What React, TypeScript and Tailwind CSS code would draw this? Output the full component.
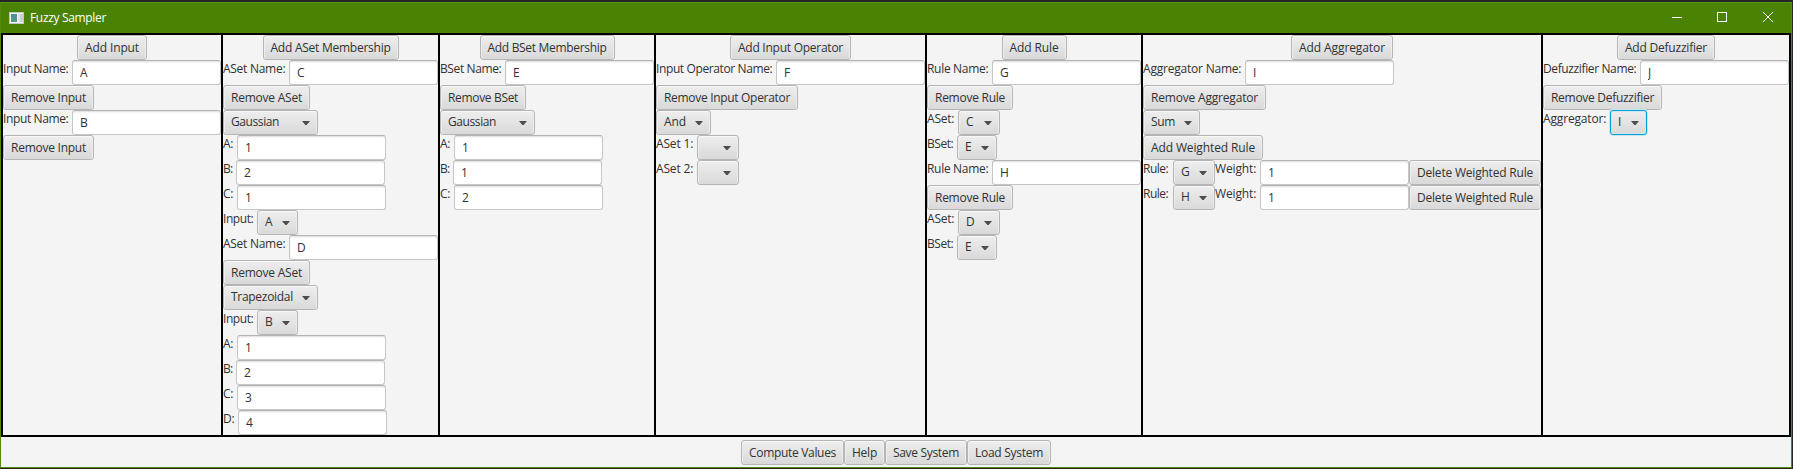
import React, { useLayoutEffect, useRef, useState } from "react";

const gradient = "bg-linear-to-b from-[#eeeeee] to-[#d9d9d9]";
const bevel = "shadow-[inset_0_1px_0_#f8f8f8,inset_1px_0_0_#eeeeee,inset_-1px_0_0_#eeeeee]";

/** Text whose tracking is adjusted so that its advance equals `t` pixels. */
function Fit({ t, children }: { t?: number; children: string }) {
  const ref = useRef<HTMLSpanElement>(null);
  const [spacing, setSpacing] = useState(0);
  useLayoutEffect(() => {
    if (!ref.current || !t || !children.length) return;
    const natural = ref.current.getBoundingClientRect().width - spacing * children.length;
    setSpacing((t - natural) / children.length);
  }, [t, children]);
  return (
    <span ref={ref} className="inline-block whitespace-nowrap" style={{ letterSpacing: spacing }}>
      {children}
    </span>
  );
}

function Btn({ w, t, children }: { w: string; t: number; children: string }) {
  return (
    <button
      className={`${w} ${gradient} ${bevel} block h-[25px] shrink-0 whitespace-nowrap rounded-[3px] border border-[#b5b5b5] p-0 pl-[7px] text-left leading-[22px]`}
    >
      <Fit t={t}>{children}</Fit>
    </button>
  );
}

function Combo({ w, value, t, focused }: { w: string; value: string; t?: number; focused?: boolean }) {
  const edge = focused
    ? "border-[#039ed3] shadow-[0_0_0_1px_#c5e6f2,inset_0_0_0_1px_#cfe6ee]"
    : `border-[#b5b5b5] ${bevel}`;
  return (
    <button
      className={`${w} ${gradient} ${edge} flex h-[25px] shrink-0 items-center justify-between rounded-[3px] border pl-[7px] pr-[7px]`}
    >
      <span className="-mt-px leading-[22px]">
        <Fit t={t}>{value}</Fit>
      </span>
      <svg width="8" height="4" viewBox="0 0 8 4" className="shrink-0">
        <path d="M0 0H8L4.6 4H3.4Z" fill="#4d4d4d" />
      </svg>
    </button>
  );
}

function Field({ value }: { value: string }) {
  return (
    <input
      readOnly
      value={value}
      className="h-[25px] w-[149px] shrink-0 rounded-[3px] border border-[#c6c6c6] border-t-[#b4b4b4] bg-white px-[7px] pb-px leading-[20px] shadow-[inset_0_2px_2px_-1px_#dcdcdc] outline-none"
    />
  );
}

function Label({ w, t, children }: { w: string; t: number; children: string }) {
  return (
    <span className={`${w} block h-4 shrink-0 whitespace-nowrap leading-[17px]`}>
      <Fit t={t - 0.7}>{children}</Fit>
    </span>
  );
}

function Row({ children, center }: { children: React.ReactNode; center?: boolean }) {
  return <div className={`flex h-[25px] items-start ${center ? "justify-center" : ""}`}>{children}</div>;
}

function Column({ w, children }: { w: string; children: React.ReactNode }) {
  return <section className={`${w} shrink-0 border-r-2 border-black`}>{children}</section>;
}

function Param({ w, t, name, value }: { w: string; t: number; name: string; value: string }) {
  return (
    <Row>
      <Label w={w} t={t}>{name}</Label>
      <Field value={value} />
    </Row>
  );
}

interface ChoiceProps {
  lw: string;
  t: number;
  name: string;
  w: string;
  value: string;
  focused?: boolean;
}

function Choice({ lw, t, name, w, value, focused }: ChoiceProps) {
  return (
    <Row>
      <Label w={lw} t={t}>{name}</Label>
      <Combo w={w} value={value} focused={focused} />
    </Row>
  );
}

function WeightedRule({ rule }: { rule: string }) {
  return (
    <Row>
      <Label w="w-[30px]" t={26}>Rule:</Label>
      <Combo w="w-[42px]" value={rule} />
      <Label w="w-[45px]" t={42}>Weight:</Label>
      <Field value="1" />
      <Btn w="w-[132px]" t={116}>Delete Weighted Rule</Btn>
    </Row>
  );
}

function TitleBar() {
  return (
    <header className="flex h-[31px] items-center justify-between border-t border-[#5a9418] bg-[#4a8204] text-white">
      <div className="flex items-center gap-[6px] pl-[8px]">
        <svg width="15" height="12" viewBox="0 0 15 12">
          <rect x="0.5" y="0.5" width="14" height="11" fill="#f4f4f4" stroke="#c3c8c6" />
          <rect x="2" y="2" width="6" height="8" fill="#4f8f9a" />
          <path d="M2 6l6 1v3H2z" fill="#4fa078" />
          <rect x="9" y="2" width="2" height="8" fill="#dfe3e6" />
          <rect x="11" y="2" width="3" height="8" fill="#ccd2da" />
        </svg>
        <span className="leading-4">
          <Fit t={76}>Fuzzy Sampler</Fit>
        </span>
      </div>
      <svg width="138" height="30" viewBox="0 1 138 30" fill="none" stroke="#fff" className="shrink-0">
        <path d="M19 15.5h10" />
        <rect x="64.5" y="10.5" width="9" height="9" />
        <path d="M110 10l10 10M120 10l-10 10" />
      </svg>
    </header>
  );
}

export default function App() {
  return (
    <div className="flex h-[469px] w-[1793px] flex-col overflow-hidden bg-[#262626] pt-[2px] pb-px pr-px font-['Open_Sans','Noto_Sans',sans-serif] text-[12px] text-[#323232]">
      <div className="flex h-[466px] flex-col border-x border-b border-[#4f8a10] bg-[#f4f4f4]">
        <TitleBar />
        <main className="flex h-[404px] border-y-2 border-l-2 border-black">
          <Column w="w-[220px]">
            <Row center><Btn w="w-[70px]" t={54}>Add Input</Btn></Row>
            <Param w="w-[69px]" t={66} name="Input Name:" value="A" />
            <Row><Btn w="w-[91px]" t={75}>Remove Input</Btn></Row>
            <Param w="w-[69px]" t={66} name="Input Name:" value="B" />
            <Row><Btn w="w-[91px]" t={75}>Remove Input</Btn></Row>
          </Column>
          <Column w="w-[217px]">
            <Row center><Btn w="w-[136px]" t={120}>Add ASet Membership</Btn></Row>
            <Param w="w-[66px]" t={63} name="ASet Name:" value="C" />
            <Row><Btn w="w-[87px]" t={71}>Remove ASet</Btn></Row>
            <Row><Combo w="w-[95px]" t={48} value="Gaussian" /></Row>
            <Param w="w-[14px]" t={11} name="A:" value="1" />
            <Param w="w-[13px]" t={10} name="B:" value="2" />
            <Param w="w-[14px]" t={11} name="C:" value="1" />
            <Choice lw="w-[34px]" t={31} name="Input:" w="w-[41px]" value="A" />
            <Param w="w-[66px]" t={63} name="ASet Name:" value="D" />
            <Row><Btn w="w-[87px]" t={71}>Remove ASet</Btn></Row>
            <Row><Combo w="w-[95px]" t={62} value="Trapezoidal" /></Row>
            <Choice lw="w-[34px]" t={31} name="Input:" w="w-[41px]" value="B" />
            <Param w="w-[14px]" t={11} name="A:" value="1" />
            <Param w="w-[13px]" t={10} name="B:" value="2" />
            <Param w="w-[14px]" t={11} name="C:" value="3" />
            <Param w="w-[15px]" t={12} name="D:" value="4" />
          </Column>
          <Column w="w-[216px]">
            <Row center><Btn w="w-[135px]" t={119}>Add BSet Membership</Btn></Row>
            <Param w="w-[65px]" t={62} name="BSet Name:" value="E" />
            <Row><Btn w="w-[86px]" t={70}>Remove BSet</Btn></Row>
            <Row><Combo w="w-[95px]" t={48} value="Gaussian" /></Row>
            <Param w="w-[14px]" t={11} name="A:" value="1" />
            <Param w="w-[13px]" t={10} name="B:" value="1" />
            <Param w="w-[14px]" t={11} name="C:" value="2" />
          </Column>
          <Column w="w-[271px]">
            <Row center><Btn w="w-[121px]" t={105}>Add Input Operator</Btn></Row>
            <Param w="w-[120px]" t={117} name="Input Operator Name:" value="F" />
            <Row><Btn w="w-[142px]" t={126}>Remove Input Operator</Btn></Row>
            <Row><Combo w="w-[55px]" t={22} value="And" /></Row>
            <Choice lw="w-[41px]" t={38} name="ASet 1:" w="w-[42px]" value="" />
            <Choice lw="w-[41px]" t={38} name="ASet 2:" w="w-[42px]" value="" />
          </Column>
          <Column w="w-[216px]">
            <Row center><Btn w="w-[65px]" t={49}>Add Rule</Btn></Row>
            <Param w="w-[65px]" t={62} name="Rule Name:" value="G" />
            <Row><Btn w="w-[86px]" t={70}>Remove Rule</Btn></Row>
            <Choice lw="w-[31px]" t={28} name="ASet:" w="w-[42px]" value="C" />
            <Choice lw="w-[30px]" t={27} name="BSet:" w="w-[40px]" value="E" />
            <Param w="w-[65px]" t={62} name="Rule Name:" value="H" />
            <Row><Btn w="w-[86px]" t={70}>Remove Rule</Btn></Row>
            <Choice lw="w-[31px]" t={28} name="ASet:" w="w-[42px]" value="D" />
            <Choice lw="w-[30px]" t={27} name="BSet:" w="w-[40px]" value="E" />
          </Column>
          <Column w="w-[400px]">
            <Row center><Btn w="w-[102px]" t={86}>Add Aggregator</Btn></Row>
            <Param w="w-[102px]" t={99} name="Aggregator Name:" value="I" />
            <Row><Btn w="w-[123px]" t={107}>Remove Aggregator</Btn></Row>
            <Row><Combo w="w-[57px]" t={24} value="Sum" /></Row>
            <Row><Btn w="w-[120px]" t={104}>Add Weighted Rule</Btn></Row>
            <WeightedRule rule="G" />
            <WeightedRule rule="H" />
          </Column>
          <Column w="w-[248px]">
            <Row center><Btn w="w-[98px]" t={82}>Add Defuzzifier</Btn></Row>
            <Param w="w-[97px]" t={94} name="Defuzzifier Name:" value="J" />
            <Row><Btn w="w-[119px]" t={103}>Remove Defuzzifier</Btn></Row>
            <Choice lw="w-[67px]" t={64} name="Aggregator:" w="w-[37px]" value="I" focused />
          </Column>
        </main>
        <footer className="flex h-[30px] justify-center pt-[3px]">
          <Btn w="w-[103px]" t={87}>Compute Values</Btn>
          <Btn w="w-[41px]" t={25}>Help</Btn>
          <Btn w="w-[82px]" t={66}>Save System</Btn>
          <Btn w="w-[84px]" t={68}>Load System</Btn>
        </footer>
      </div>
    </div>
  );
}
